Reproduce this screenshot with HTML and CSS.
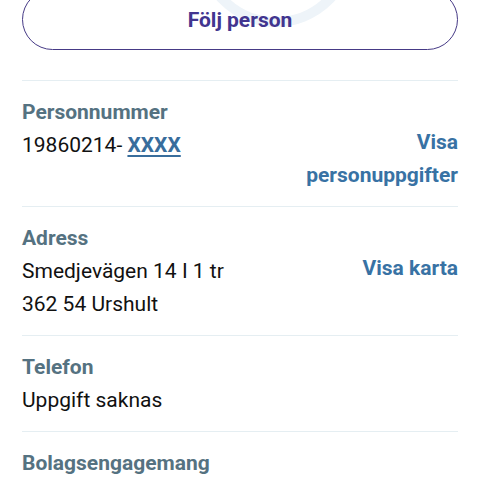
FILE: index.html
```html
<!DOCTYPE html>
<html lang="sv">
<head>
    <meta charset="UTF-8">
    <meta name="viewport" content="width=device-width, initial-scale=1.0">
    <title>Person</title>
    <link rel="stylesheet" href="styles.css">
</head>
<body>
    <div class="page">
        <div class="ring"></div>
        <button class="follow-button">Följ person</button>

        <div class="info-section">
            <div class="info-label">Personnummer</div>
            <div class="info-row">
                <div class="info-value">19860214- <a href="#" class="masked">XXXX</a></div>
                <a href="#" class="info-action">Visa<br>personuppgifter</a>
            </div>
        </div>

        <div class="info-section">
            <div class="info-label">Adress</div>
            <div class="info-row">
                <div class="info-value">Smedjevägen 14 I 1 tr<br>362 54 Urshult</div>
                <a href="#" class="info-action">Visa karta</a>
            </div>
        </div>

        <div class="info-section">
            <div class="info-label">Telefon</div>
            <div class="info-row">
                <div class="info-value">Uppgift saknas</div>
            </div>
        </div>

        <div class="info-section">
            <div class="info-label">Bolagsengagemang</div>
        </div>
    </div>
</body>
</html>
```

FILE: styles.css
```css
html, body {
    height: 100%;
    overflow: hidden;
}
body {
    margin: 0;
    padding: 0;
    font-family: Roboto, 'Liberation Sans', sans-serif;
    color: #111111;
    background-color: #ffffff;
}
.page {
    position: relative;
    padding: 0 22px;
}
.ring {
    position: absolute;
    left: 197px;
    top: -120px;
    width: 138px;
    height: 138px;
    border: 10px solid #eef4f9;
    border-radius: 50%;
}
.follow-button {
    position: relative;
    display: block;
    width: 100%;
    height: 61px;
    margin-top: -11px;
    margin-bottom: 30px;
    background-color: transparent;
    border: 1.5px solid #463a86;
    border-radius: 31px;
    color: #42358f;
    font-family: Roboto, 'Liberation Sans', sans-serif;
    font-size: 21px;
    font-weight: 700;
    padding: 0;
    cursor: pointer;
}
.info-section {
    border-top: 1px solid #e5eef2;
    padding: 15px 0 14px;
}
.info-label {
    font-size: 21px;
    font-weight: 700;
    line-height: 33px;
    color: #557281;
}
.info-row {
    display: flex;
    justify-content: space-between;
    align-items: flex-start;
}
.info-value {
    font-size: 21px;
    line-height: 33px;
    color: #111111;
}
.masked {
    color: #386d9c;
    font-weight: 700;
    text-decoration: underline;
    text-decoration-thickness: 2px;
    text-underline-offset: 3px;
}
.info-action {
    font-size: 21px;
    font-weight: 700;
    line-height: 33px;
    color: #3872a4;
    text-align: right;
    text-decoration: none;
    margin-top: -3px;
}
```
